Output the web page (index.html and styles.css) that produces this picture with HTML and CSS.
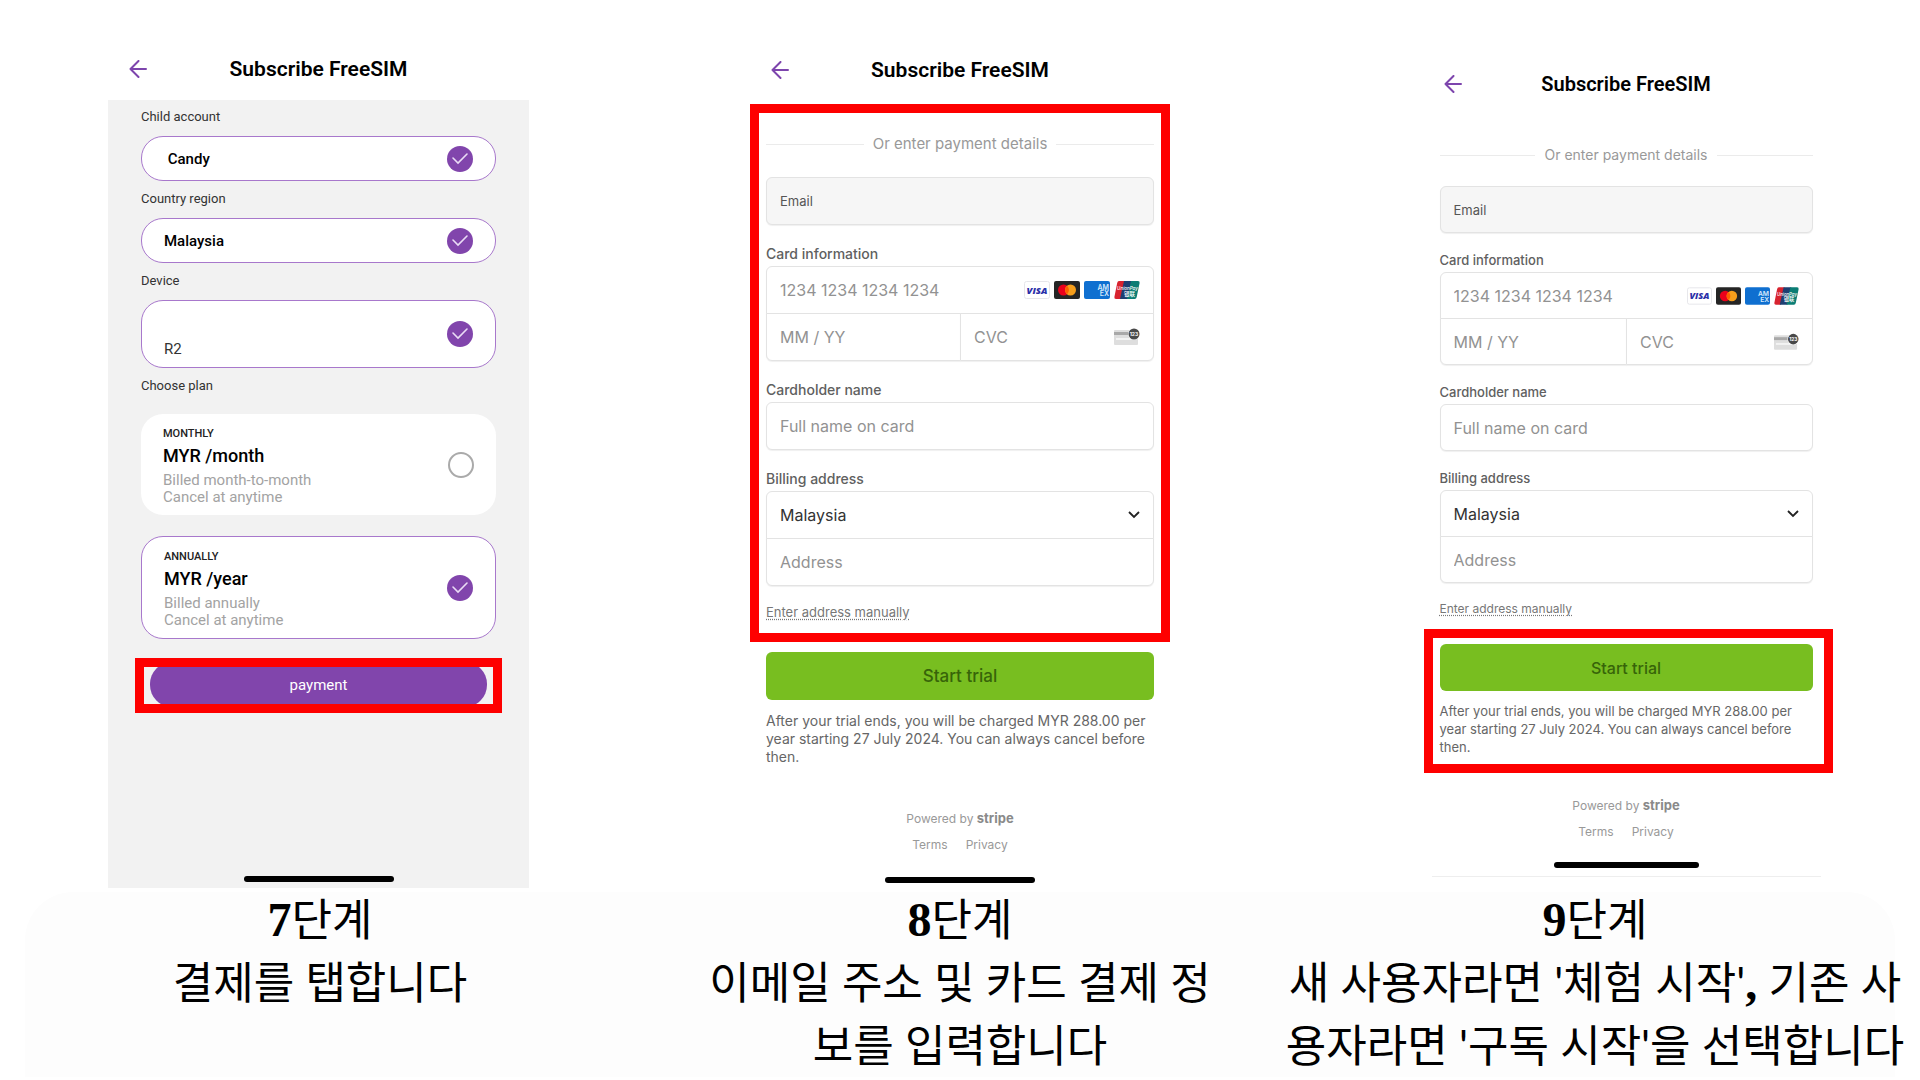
FILE: index.html
```html
<!DOCTYPE html>
<html lang="ko">
<head>
  <meta charset="UTF-8">
  <meta name="viewport" content="width=device-width, initial-scale=1.0">
  <title>Subscribe FreeSIM</title>
  <link rel="stylesheet" href="styles.css">
</head>
<body>
  <!-- Shared icons -->
  <svg class="sprite" aria-hidden="true">
    <symbol id="icon-back" viewBox="0 0 18 18">
      <path d="M17 9H1.500M9.500 1 1.500 9l8 8" fill="none" stroke="#7d45ad" stroke-width="2" stroke-linecap="round" stroke-linejoin="round"/>
    </symbol>
    <symbol id="icon-visa" viewBox="0 0 26 18">
      <rect x=".5" y=".5" width="25" height="17" rx="2" fill="#fff" stroke="#e6e6ea"/>
      <text x="13" y="12.500" text-anchor="middle" font-family="Open Sans, sans-serif" font-size="9.500" font-weight="800" font-style="italic" fill="#2a2fa8">VISA</text>
    </symbol>
    <symbol id="icon-mastercard" viewBox="0 0 26 18">
      <rect width="26" height="18" rx="2" fill="#252525"/>
      <circle cx="9.500" cy="9" r="5.500" fill="#eb001b"/>
      <circle cx="16.500" cy="9" r="5.500" fill="#f79e1b"/>
      <path d="M13 4.800a5.500 5.500 0 0 1 0 8.400 5.500 5.500 0 0 1 0-8.400z" fill="#ff5f00"/>
    </symbol>
    <symbol id="icon-amex" viewBox="0 0 26 18">
      <rect width="26" height="18" rx="2" fill="#0f6fd0"/>
      <text x="25" y="9" text-anchor="end" font-family="Inter, sans-serif" font-size="7" font-weight="600" fill="#d6e9fb">AM</text>
      <text x="25" y="15" text-anchor="end" font-family="Inter, sans-serif" font-size="7" font-weight="600" fill="#d6e9fb">EX</text>
    </symbol>
    <symbol id="icon-unionpay" viewBox="0 0 26 18">
      <path d="M5 0h6L7 18H2q-2 0-1.600-2L3.200 2Q3.600 0 5 0z" fill="#d8232f"/>
      <path d="M10 0h8l-4 18H6z" fill="#1d3f72"/>
      <path d="M17 0h7q2 0 1.600 2l-2.900 14q-.4 2-2 2H13z" fill="#0b7d74"/>
      <text x="13.500" y="8.500" text-anchor="middle" font-family="Inter, sans-serif" font-size="4.500" font-weight="500" font-style="italic" fill="#fff">UnionPay</text>
      <text x="15.500" y="14.500" text-anchor="middle" font-family="Noto Sans CJK SC, sans-serif" font-size="5.500" font-weight="500" fill="#fff">银联</text>
    </symbol>
    <symbol id="icon-cvc" viewBox="0 0 26 18">
      <rect x="0" y="2" width="24" height="15" rx="1" fill="#dedede"/>
      <rect x="0" y="4" width="24" height="3" fill="#a9a9a9"/>
      <rect x="2" y="10" width="20" height="2" fill="#f3f3f3"/>
      <circle cx="20" cy="6" r="6" fill="#fff"/>
      <circle cx="20" cy="6" r="5.500" fill="#494949"/>
      <text x="20" y="8" text-anchor="middle" font-family="Inter, sans-serif" font-size="5" font-weight="700" fill="#fff">123</text>
    </symbol>
  </svg>

  <main class="phones">
    <!-- Step 7: plan selection -->
    <section class="phone phone-plan">
      <header class="topbar">
        <button type="button" class="back" aria-label="Back"><svg><use href="#icon-back"/></svg></button>
        <h2>Subscribe FreeSIM</h2>
      </header>
      <form class="plan-form">
        <h3>Child account</h3>
        <label class="option">
          <b>&nbsp;Candy</b>
          <input type="checkbox" checked>
        </label>
        <h3>Country region</h3>
        <label class="option">
          <b>Malaysia</b>
          <input type="checkbox" checked>
        </label>
        <h3>Device</h3>
        <label class="option option-device">
          <span>R2</span>
          <input type="checkbox" checked>
        </label>
        <h3>Choose plan</h3>
        <div class="plans">
          <label class="plan">
            <span class="plan-text">
              <small>MONTHLY</small>
              <strong>MYR /month</strong>
              <span>Billed month-to-month<br>Cancel at anytime</span>
            </span>
            <input type="radio" name="plan">
          </label>
          <label class="plan plan-selected">
            <span class="plan-text">
              <small>ANNUALLY</small>
              <strong>MYR /year</strong>
              <span>Billed annually<br>Cancel at anytime</span>
            </span>
            <input type="radio" name="plan" checked>
          </label>
        </div>
        <div class="highlight highlight-pay">
          <button type="button" class="pay">payment</button>
        </div>
      </form>
      <div class="home-bar"></div>
    </section>

    <!-- Step 8: payment details -->
    <section class="phone phone-card">
      <header class="topbar">
        <button type="button" class="back" aria-label="Back"><svg><use href="#icon-back"/></svg></button>
        <h2>Subscribe FreeSIM</h2>
      </header>
      <form>
        <div class="highlight details">
          <div class="divider">Or enter payment details</div>
          <label class="cell email"><span>Email</span><input type="email" aria-label="Email"></label>
          <label class="caption" for="number8">Card information</label>
          <div class="group">
            <div class="cell">
              <input type="text" id="number8" placeholder="1234 1234 1234 1234">
              <span class="brands">
                <svg><use href="#icon-visa"/></svg>
                <svg><use href="#icon-mastercard"/></svg>
                <svg><use href="#icon-amex"/></svg>
                <svg><use href="#icon-unionpay"/></svg>
              </span>
            </div>
            <div class="split">
              <div class="cell"><input type="text" placeholder="MM / YY" aria-label="Expiry date"></div>
              <div class="cell">
                <input type="text" placeholder="CVC" aria-label="CVC">
                <span class="brands"><svg><use href="#icon-cvc"/></svg></span>
              </div>
            </div>
          </div>
          <label class="caption" for="name8">Cardholder name</label>
          <div class="cell"><input type="text" id="name8" placeholder="Full name on card"></div>
          <label class="caption" for="country8">Billing address</label>
          <div class="group">
            <div class="cell"><select id="country8"><option>Malaysia</option></select></div>
            <div class="cell"><input type="text" placeholder="Address" aria-label="Address"></div>
          </div>
          <a class="manual" href="#">Enter address manually</a>
        </div>
        <div class="submit">
          <button type="button" class="start">Start trial</button>
          <p>After your trial ends, you will be charged MYR 288.00 per year starting 27 July 2024. You can always cancel before then.</p>
        </div>
      </form>
      <footer class="legal">
        <a href="#">Powered by <b>stripe</b></a>
        <nav><a href="#">Terms</a><a href="#">Privacy</a></nav>
      </footer>
      <div class="home-bar"></div>
    </section>

    <!-- Step 9: start the trial -->
    <section class="phone phone-card phone-small">
      <header class="topbar">
        <button type="button" class="back" aria-label="Back"><svg><use href="#icon-back"/></svg></button>
        <h2>Subscribe FreeSIM</h2>
      </header>
      <form>
        <div class="details">
          <div class="divider">Or enter payment details</div>
          <label class="cell email"><span>Email</span><input type="email" aria-label="Email"></label>
          <label class="caption" for="number9">Card information</label>
          <div class="group">
            <div class="cell">
              <input type="text" id="number9" placeholder="1234 1234 1234 1234">
              <span class="brands">
                <svg><use href="#icon-visa"/></svg>
                <svg><use href="#icon-mastercard"/></svg>
                <svg><use href="#icon-amex"/></svg>
                <svg><use href="#icon-unionpay"/></svg>
              </span>
            </div>
            <div class="split">
              <div class="cell"><input type="text" placeholder="MM / YY" aria-label="Expiry date"></div>
              <div class="cell">
                <input type="text" placeholder="CVC" aria-label="CVC">
                <span class="brands"><svg><use href="#icon-cvc"/></svg></span>
              </div>
            </div>
          </div>
          <label class="caption" for="name9">Cardholder name</label>
          <div class="cell"><input type="text" id="name9" placeholder="Full name on card"></div>
          <label class="caption" for="country9">Billing address</label>
          <div class="group">
            <div class="cell"><select id="country9"><option>Malaysia</option></select></div>
            <div class="cell"><input type="text" placeholder="Address" aria-label="Address"></div>
          </div>
          <a class="manual" href="#">Enter address manually</a>
        </div>
        <div class="submit highlight">
          <button type="button" class="start">Start trial</button>
          <p>After your trial ends, you will be charged MYR 288.00 per year starting 27 July 2024. You can always cancel before then.</p>
        </div>
      </form>
      <footer class="legal">
        <a href="#">Powered by <b>stripe</b></a>
        <nav><a href="#">Terms</a><a href="#">Privacy</a></nav>
      </footer>
      <div class="home-bar"></div>
    </section>
  </main>

  <section class="steps">
    <p><b>7</b>단계<br>결제를 탭합니다</p>
    <p><b>8</b>단계<br>이메일 주소 및 카드 결제 정<br>보를 입력합니다</p>
    <p><b>9</b>단계<br>새 사용자라면 '체험 시작'<b>,</b> 기존 사<br>용자라면 '구독 시작'을 선택합니다</p>
  </section>
</body>
</html>
```
FILE: styles.css
```css
* {
  box-sizing: border-box;
}
body {
  margin: 0;
  background-color: #fff;
  color: #000;
  font-family: Roboto, sans-serif;
}
h2, h3, p {
  margin: 0;
}
button, input, select {
  margin: 0;
  padding: 0;
  border: none;
  font-family: inherit;
}
button {
  cursor: pointer;
}
.sprite {
  display: none;
}

/* Phones */
.phones {
  display: grid;
  grid-template-columns: repeat(3, 1fr);
  align-items: start;
  justify-items: center;
}
.phone {
  width: 100%;
  max-width: 420px;
}
.topbar {
  display: grid;
  grid-template-columns: 1fr auto 1fr;
  align-items: center;
  height: 104px;
  padding: 36px 21px 0;
}
.topbar h2 {
  font-size: 21px;
  font-weight: 600;
  line-height: 26px;
}
.back {
  width: 18px;
  height: 18px;
  background: none;
}
.back svg {
  display: block;
  width: 18px;
  height: 18px;
}
.highlight {
  border: 9px solid #fe0000;
}
.home-bar {
  width: 150px;
  height: 6px;
  margin: 0 auto;
  border-radius: 3px;
  background-color: #000;
}

/* Plan screen */
.phone-plan {
  display: flex;
  flex-direction: column;
  max-width: 421px;
  height: 888px;
  margin-right: 3px;
  padding-bottom: 6px;
  background: linear-gradient(#fff 100px, #f2f2f2 100px);
}
.phone-plan .topbar {
  height: 100px;
  padding-top: 38px;
}
.phone-plan .home-bar {
  margin-top: auto;
}
.plan-form {
  padding: 9px 33px 0;
}
.plan-form h3 {
  margin: 10px 0 11px;
  color: #333;
  font-size: 13px;
  font-weight: 400;
  line-height: 16px;
}
.plan-form h3:first-child {
  margin-top: 0;
}
.option, .plan {
  display: flex;
  align-items: center;
  justify-content: space-between;
  padding: 0 22px;
  background-color: #fff;
}
.option {
  height: 45px;
  border: 1px solid #a878cc;
  border-radius: 22px;
  font-size: 15px;
}
.option b {
  font-weight: 500;
}
.option-device {
  height: 68px;
  color: #333;
}
.option-device span {
  align-self: flex-end;
  padding-bottom: 9px;
}
.option input, .plan input {
  appearance: none;
  flex: none;
  width: 26px;
  height: 26px;
  border: 2px solid #aaa;
  border-radius: 50%;
}
.option input:checked, .plan input:checked {
  border: none;
  background: #8145ac url("data:image/svg+xml,%3Csvg xmlns='http://www.w3.org/2000/svg' viewBox='0 0 26 26'%3E%3Cpath d='M6 12l5 5 9-9' fill='none' stroke='%23eadcf5' stroke-width='1.6' stroke-linecap='round'/%3E%3C/svg%3E") center / 26px;
}
.plans {
  display: grid;
  gap: 21px;
  margin: 20px 0 19px;
}
.plan {
  padding: 13px 22px 9px;
  border-radius: 22px;
}
.plan input {
  margin-bottom: 4px;
}
.plan-selected {
  border: 1px solid #a878cc;
}
.plan-text {
  display: flex;
  flex-direction: column;
  color: #a3a3a3;
  font-size: 15px;
  line-height: 17px;
}
.plan small {
  color: #222;
  font-size: 11px;
  font-weight: 500;
  line-height: 14px;
}
.plan strong {
  margin: 4px 0 5px;
  color: #000;
  font-size: 18px;
  font-weight: 500;
  line-height: 22px;
}
.highlight-pay {
  height: 55px;
  margin: 0 -6px;
  padding: 0 6px;
  overflow: hidden;
}
.pay {
  width: 100%;
  height: 45px;
  margin: -5px 0;
  border-radius: 22px;
  background-color: #8145ac;
  color: #fff;
  font-size: 15px;
}

/* Card screens */
.phone-card {
  --row: 48px;
  --gap: 20px;
  --start: 17px;
  --divider: 15px;
  --caption: 14px;
  --manual: 13px;
  --note: 14px;
}
.phone-card form, .legal {
  font-family: Inter, sans-serif;
}
.details {
  padding: 21px 7px 10px;
}
.divider {
  display: flex;
  align-items: center;
  gap: 9px;
  margin-bottom: 23px;
  color: #999;
  font-size: var(--divider);
  line-height: 20px;
}
.divider::before, .divider::after {
  content: "";
  flex: 1;
  height: 1px;
  background-color: #ebebeb;
}
.cell {
  display: flex;
  align-items: center;
  gap: 8px;
  min-width: 0;
  height: var(--row);
  padding: 0 13px;
  border: 1px solid #e3e3e3;
  border-radius: 6px;
  background-color: #fff;
  box-shadow: 0 1px 1px #f0f0f0;
}
.cell input, .cell select {
  flex: 1;
  min-width: 0;
  height: 100%;
  background: none;
  color: #333;
  font-size: 16px;
  outline: none;
}
.cell input::placeholder {
  color: #929292;
  opacity: 1;
}
.cell select {
  appearance: none;
  background: url("data:image/svg+xml,%3Csvg xmlns='http://www.w3.org/2000/svg' viewBox='0 0 12 8'%3E%3Cpath d='M1 1l5 5 5-5' fill='none' stroke='%23222' stroke-width='1.8'/%3E%3C/svg%3E") right center / 12px 8px no-repeat;
}
.email {
  background-color: #f6f6f6;
  color: #555;
  font-size: 13px;
}
.caption {
  display: block;
  margin: var(--gap) 0 3px;
  color: #606060;
  font-size: var(--caption);
  font-weight: 500;
  line-height: 18px;
}
.group > :first-child {
  border-radius: 6px 6px 0 0;
}
.group > :last-child {
  margin-top: -1px;
  border-radius: 0 0 6px 6px;
}
.split {
  display: grid;
  grid-template-columns: repeat(2, minmax(0, 1fr));
}
.split .cell:first-child {
  margin-right: -1px;
  border-radius: 0 0 0 6px;
}
.split .cell:last-child {
  border-radius: 0 0 6px 0;
}
.brands {
  display: flex;
  gap: 4px;
}
.brands svg {
  width: 26px;
  height: 18px;
}
.manual {
  display: block;
  width: fit-content;
  margin-top: 17px;
  color: #777;
  font-size: var(--manual);
  line-height: 18px;
  text-decoration: underline dotted;
  text-underline-offset: 2px;
}
.phone-card .highlight.details {
  padding-bottom: 12px;
}
.submit {
  padding: 10px 16px 0;
}
.start {
  display: block;
  width: 100%;
  height: var(--row);
  border-radius: 6px;
  background-color: #78be20;
  color: #376409;
  font-size: var(--start);
  font-weight: 500;
}
.submit p {
  margin-top: 12px;
  color: #666;
  font-size: var(--note);
  line-height: 18px;
}
.legal {
  margin: 43px 0 23px;
  color: #999;
  font-size: 12px;
  line-height: 18px;
  text-align: center;
}
.legal a {
  color: inherit;
  text-decoration: none;
}
.legal b {
  color: #8a8a8a;
  font-size: 13px;
}
.legal nav {
  display: flex;
  justify-content: center;
  gap: 18px;
  margin-top: 8px;
}

/* Smaller card screen */
.phone-small {
  --row: 47px;
  --gap: 18px;
  --start: 16px;
  --divider: 14px;
  --caption: 13px;
  --manual: 12px;
  --note: 13px;
  max-width: 405px;
  margin-left: 52px;
}
.phone-small .topbar {
  height: 116px;
  padding: 52px 20px 0;
}
.phone-small .topbar h2 {
  font-size: 20px;
}
.phone-small .details {
  padding: 29px 16px 11px;
}
.phone-small .divider {
  margin-bottom: 21px;
}
.phone-small .brands svg {
  width: 25px;
}
.phone-small .submit {
  margin-right: -4px;
  padding: 6px 11px 8px 7px;
}
.phone-small .submit p {
  margin-top: 11px;
}
.phone-small .legal {
  margin: 23px 0 21px;
}
.phone-small .home-bar {
  width: 145px;
}
.phone-small::after {
  content: "";
  display: block;
  height: 1px;
  margin: 8px 8px 0;
  background-color: #eee;
}

/* Step captions */
.steps {
  position: relative;
  display: grid;
  grid-template-columns: repeat(3, minmax(0, 1fr));
  font-family: Lato, "Noto Sans CJK KR", sans-serif;
  font-size: 44px;
  line-height: 63px;
  text-align: center;
  white-space: nowrap;
}
.steps p:last-child {
  padding-right: 10px;
}
.steps::before {
  content: "";
  position: absolute;
  inset: 4px 25px 0;
  z-index: -1;
  border-radius: 48px 48px 0 0;
  background-color: #fdfdfd;
}
.steps b {
  font-family: "Liberation Serif", serif;
  font-size: 48px;
  line-height: 1;
}
```
